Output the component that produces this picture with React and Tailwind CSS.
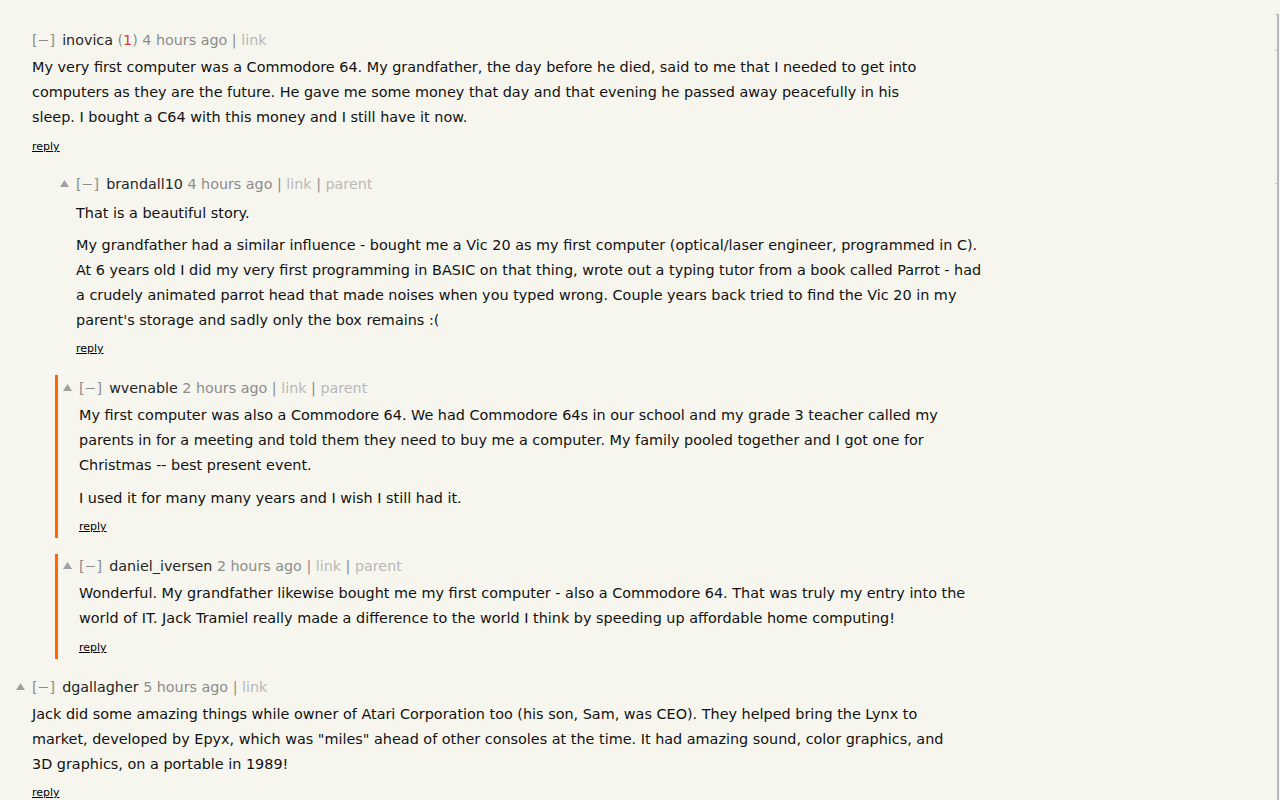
import React from "react";

const MINUS = "\u2212";

function Arrow() {
  return (
    <svg
      className="absolute right-[calc(100%+7px)] top-[8px]"
      width="9"
      height="7"
      viewBox="0 0 9 7"
    >
      <polygon points="4.5,0 9,7 0,7" fill="#a0a0a0" />
    </svg>
  );
}

function Header({ user, score, age, parent, arrow }) {
  return (
    <div className="relative h-[25px] whitespace-nowrap text-[14.3px] leading-[25px] text-[#8c8c8c]">
      {arrow && <Arrow />}
      <span>[{MINUS}]</span>
      <span className="ml-[7px] text-[#262626]">{user}</span>
      {score && (
        <span>
          {" "}(<span className="text-[#e0412f]">{score}</span>)
        </span>
      )}
      <span> {age} | </span>
      <a className="text-[#b8b8b8]">link</a>
      {parent && (
        <>
          <span> | </span>
          <a className="text-[#b8b8b8]">parent</a>
        </>
      )}
    </div>
  );
}

function Reply() {
  return (
    <div className="mt-[8px] h-[16px] text-[11px] leading-[16px]">
      <a className="text-black underline">reply</a>
    </div>
  );
}

function Body({ paras, gap = "mt-[8px]" }) {
  return (
    <div className="mt-[2px] text-[14.4px] leading-[25px] text-[#111]">
      {paras.map((lines, i) => (
        <p key={i} className={i > 0 ? gap : ""}>
          {lines.map((l, j) => (
            <React.Fragment key={j}>
              {l}
              {j < lines.length - 1 && <br />}
            </React.Fragment>
          ))}
        </p>
      ))}
    </div>
  );
}

export default function App() {
  return (
    <div className="relative min-h-screen w-full overflow-hidden bg-[#f6f6ef] font-['DejaVu_Sans',Verdana,sans-serif]">
      {/* right edge frame line */}
      <div className="absolute bottom-0 right-[1px] top-[14px] w-[2px] bg-[#b8b8b8]" />
      <div className="absolute right-[3px] top-[14px] h-[1px] w-[2px] bg-[#c4c4c4]" />
      <div className="absolute right-[3px] top-[50px] h-[1px] w-[2px] bg-[#c4c4c4]" />
      <div className="absolute right-[3px] top-[183px] h-[1px] w-[2px] bg-[#c4c4c4]" />

      <div className="pt-[28px]">
        {/* inovica */}
        <div className="pl-[32px]">
          <Header user="inovica" score="1" age="4 hours ago" />
          <Body
            paras={[
              [
                "My very first computer was a Commodore 64. My grandfather, the day before he died, said to me that I needed to get into",
                "computers as they are the future. He gave me some money that day and that evening he passed away peacefully in his",
                "sleep. I bought a C64 with this money and I still have it now.",
              ],
            ]}
          />
          <div className="pt-[1px]">
            <Reply />
          </div>
        </div>

        {/* brandall10 */}
        <div className="mt-[17px] pl-[76px]">
          <Header user="brandall10" age="4 hours ago" parent arrow />
          <div className="pt-[2px]">
            <Body
              gap="mt-[7px]"
              paras={[
                ["That is a beautiful story."],
                [
                  "My grandfather had a similar influence - bought me a Vic 20 as my first computer (optical/laser engineer, programmed in C).",
                  "At 6 years old I did my very first programming in BASIC on that thing, wrote out a typing tutor from a book called Parrot - had",
                  "a crudely animated parrot head that made noises when you typed wrong. Couple years back tried to find the Vic 20 in my",
                  "parent's storage and sadly only the box remains :(",
                ],
              ]}
            />
          </div>
          <Reply />
        </div>

        {/* wvenable */}
        <div className="ml-[55px] mt-[18px] border-l-[3px] border-[#ff6600] pb-[3px] pl-[21px] pt-[1px]">
          <Header user="wvenable" age="2 hours ago" parent arrow />
          <Body
            paras={[
              [
                "My first computer was also a Commodore 64. We had Commodore 64s in our school and my grade 3 teacher called my",
                "parents in for a meeting and told them they need to buy me a computer. My family pooled together and I got one for",
                "Christmas -- best present event.",
              ],
              ["I used it for many many years and I wish I still had it."],
            ]}
          />
          <Reply />
        </div>

        {/* daniel_iversen */}
        <div className="ml-[55px] mt-[16px] border-l-[3px] border-[#ff6600] pb-[3px] pl-[21px]">
          <Header user="daniel_iversen" age="2 hours ago" parent arrow />
          <Body
            paras={[
              [
                "Wonderful. My grandfather likewise bought me my first computer - also a Commodore 64. That was truly my entry into the",
                "world of IT. Jack Tramiel really made a difference to the world I think by speeding up affordable home computing!",
              ],
            ]}
          />
          <div className="pt-[1px]">
            <Reply />
          </div>
        </div>

        {/* dgallagher */}
        <div className="mt-[16px] pl-[32px]">
          <Header user="dgallagher" age="5 hours ago" arrow />
          <Body
            paras={[
              [
                "Jack did some amazing things while owner of Atari Corporation too (his son, Sam, was CEO). They helped bring the Lynx to",
                "market, developed by Epyx, which was \"miles\" ahead of other consoles at the time. It had amazing sound, color graphics, and",
                "3D graphics, on a portable in 1989!",
              ],
            ]}
          />
          <Reply />
        </div>
      </div>
    </div>
  );
}
